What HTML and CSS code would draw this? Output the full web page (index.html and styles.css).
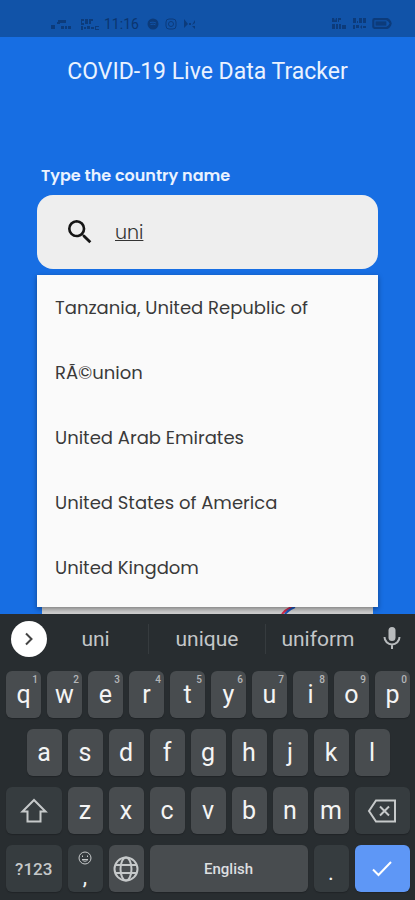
FILE: index.html
```
<!DOCTYPE html>
<html lang="en">
<head>
<meta charset="utf-8">
<meta name="viewport" content="width=device-width, initial-scale=1">
<title>COVID-19 Live Data Tracker</title>
<link rel="stylesheet" href="styles.css">
</head>
<body>
<div class="status">
  <div class="status-group">
    <svg width="22" height="14" viewBox="0 0 22 14" aria-hidden="true"><path d="M1 8h4v4H1zM8 3h8v3H8zM7 5h3v2H7zM11 9h3v3h-3zM15 9h2v3h-2zM18 9h3v3h-3z"/></svg>
    <svg class="net" width="20" height="14" viewBox="0 0 20 14" aria-hidden="true"><path d="M1 2h3v2H2v2h2v2H1zM5 2h3v5H5zM9 2h4v2h-2v3H9zM1 9h2v4H1zM4 10h2v2H4zM7 9h3v3H7zM11 10h3v2h-3zM15 9h4v1h-3v2h3v1h-4z"/></svg>
    <time class="clock">11:16</time>
    <svg class="app" width="12" height="12" viewBox="0 0 12 12" aria-hidden="true"><circle cx="6" cy="6" r="5.5"/><path class="cut" d="M3 4.5q3-1 6 .5M3.5 6.500q3-.8 5 .3"/></svg>
    <svg class="app line" width="12" height="12" viewBox="0 0 12 12" aria-hidden="true"><rect x="1" y="1" width="10" height="10" rx="3"/><circle cx="6" cy="6" r="2.500"/></svg>
    <svg width="13" height="12" viewBox="0 0 13 12" aria-hidden="true"><path d="M1 1l4 5-4 4zM6 5h2v2H6zM12 2v3L9 7zM9 8h3v3z"/></svg>
  </div>
  <div class="status-group">
    <svg width="16" height="13" viewBox="0 0 16 13" aria-hidden="true"><path d="M1 1h2l1 3 1-3h1v4H1zM7 1h3v2H8v2H7zM1 7h3v5H1zM5 7h2v5H5zM8 7h2v5H8zM11 8h4v4h-4z"/></svg>
    <svg width="16" height="13" viewBox="0 0 16 13" aria-hidden="true"><path d="M2 1h3v5H2zM6 4h1v2H6zM8 1h3v5H8zM12 1h3v5h-3zM2 8h2v4H2zM5 8h3v3H5zM9 10l2-2v4zM12 9h3v2h-3z"/></svg>
    <svg width="22" height="13" viewBox="0 0 20 12" aria-hidden="true"><path fill-rule="evenodd" d="M3 1h12q3 1 4 5-1 4-4 5H3q-2 0-2-2V3q0-2 2-2zM3 3v6h11q2-1 3-3-1-2-3-3z"/><path d="M4 4h10v4H4z"/></svg>
  </div>
</div>
<main class="app-body">
  <h1 class="title">COVID-19 Live Data Tracker</h1>
  <div class="finder">
    <label class="label" for="country">Type the country name</label>
    <div class="search">
      <svg width="32" height="32" viewBox="0 0 24 24" aria-hidden="true"><path d="M15.500 14h-.79l-.28-.27A6.470 6.470 0 0 0 16 9.500 6.500 6.500 0 1 0 9.500 16c1.610 0 3.090-.59 4.230-1.570l.27.28v.79l5 4.990L20.490 19l-4.990-5zm-6 0C7.010 14 5 11.990 5 9.500S7.010 5 9.500 5 14 7.010 14 9.500 11.990 14 9.500 14z"/></svg>
      <input class="search-input" id="country" type="text" value="uni" autocomplete="off" spellcheck="false">
    </div>
    <ul class="options">
      <li><button class="option" type="button">Tanzania, United Republic of</button></li>
      <li><button class="option" type="button">RÃ©union</button></li>
      <li><button class="option" type="button">United Arab Emirates</button></li>
      <li><button class="option" type="button">United States of America</button></li>
      <li><button class="option" type="button">United Kingdom</button></li>
    </ul>
    <div class="card-behind">
      <svg width="16" height="7" viewBox="0 0 16 7" aria-hidden="true"><path d="M1 7Q5 2 11 0" stroke="#d32a4c"/><path d="M4 7Q8 2 14 0" stroke="#1d55b8"/></svg>
    </div>
  </div>
</main>
<section class="keyboard" aria-label="Keyboard">
  <div class="suggestions">
    <button class="expand" type="button" aria-label="More"><svg width="18" height="18" viewBox="0 0 18 18" aria-hidden="true"><path d="M6 3.500l5.500 5.500L6 14.500"/></svg></button>
    <button class="word" type="button">uni</button>
    <button class="word" type="button">unique</button>
    <button class="word" type="button">uniform</button>
    <button class="mic" type="button" aria-label="Voice input"><svg width="24" height="26" viewBox="0 0 24 26" aria-hidden="true"><rect x="8.500" y="1" width="7" height="14" rx="3.500"/><path d="M4.500 11a7.500 7.500 0 0 0 15 0M12 18.500V23"/></svg></button>
  </div>
  <div class="keys">
    <button class="key" type="button">q<sup>1</sup></button>
    <button class="key" type="button">w<sup>2</sup></button>
    <button class="key" type="button">e<sup>3</sup></button>
    <button class="key" type="button">r<sup>4</sup></button>
    <button class="key" type="button">t<sup>5</sup></button>
    <button class="key" type="button">y<sup>6</sup></button>
    <button class="key" type="button">u<sup>7</sup></button>
    <button class="key" type="button">i<sup>8</sup></button>
    <button class="key" type="button">o<sup>9</sup></button>
    <button class="key" type="button">p<sup>0</sup></button>
    <button class="key indent" type="button">a</button>
    <button class="key" type="button">s</button>
    <button class="key" type="button">d</button>
    <button class="key" type="button">f</button>
    <button class="key" type="button">g</button>
    <button class="key" type="button">h</button>
    <button class="key" type="button">j</button>
    <button class="key" type="button">k</button>
    <button class="key" type="button">l</button>
    <button class="key wide dim" type="button" aria-label="Shift"><svg width="28" height="28" viewBox="0 0 28 28" aria-hidden="true"><path d="M14 3L2.500 14.500H7.500V24.500H20.500V14.500H25.500Z"/></svg></button>
    <button class="key" type="button">z</button>
    <button class="key" type="button">x</button>
    <button class="key" type="button">c</button>
    <button class="key" type="button">v</button>
    <button class="key" type="button">b</button>
    <button class="key" type="button">n</button>
    <button class="key" type="button">m</button>
    <button class="key wide dim" type="button" aria-label="Delete"><svg width="30" height="26" viewBox="0 0 30 26" aria-hidden="true"><path d="M9 2.500H28V23.500H9L2 13ZM13 8.500l9 9M22 8.500l-9 9"/></svg></button>
    <button class="key wide dim mode" type="button">?123</button>
    <button class="key dim comma" type="button"><svg width="14" height="14" viewBox="0 0 14 14" aria-hidden="true"><circle cx="7" cy="7" r="6"/><path d="M4.500 4.500v1.500M9.500 4.500v1.500M4 8.500q3 3.500 6 0z"/></svg><span>,</span></button>
    <button class="key" type="button" aria-label="Change language"><svg width="28" height="28" viewBox="0 0 28 28" aria-hidden="true"><circle cx="14" cy="14" r="11.500"/><ellipse cx="14" cy="14" rx="5.500" ry="11.500"/><path d="M3.500 10h21M3.500 18h21"/></svg></button>
    <button class="key space" type="button">English</button>
    <button class="key dim period" type="button">.</button>
    <button class="key wide done" type="button" aria-label="Done"><svg width="24" height="24" viewBox="0 0 24 24" aria-hidden="true"><path d="M3 12.500l5.500 5.500L21 5"/></svg></button>
  </div>
</section>
</body>
</html>
```
FILE: styles.css
```
* { box-sizing: border-box; }

body {
  margin: 0;
  min-height: 100vh;
  display: flex;
  flex-direction: column;
  background: #176ee3;
  font-family: Roboto, sans-serif;
}

button {
  margin: 0;
  padding: 0;
  border: 0;
  background: none;
  font: inherit;
  color: inherit;
}

.status {
  height: 37px;
  padding: 10px 22px 0 50px;
  display: flex;
  align-items: center;
  justify-content: space-between;
  background: #1153a8;
  color: #0b356f;
}

.status-group {
  display: flex;
  align-items: center;
  gap: 4px;
}

.status svg { fill: #0c3b7b; }
.status .net { margin-left: 4px; }
.status .app { margin-right: 2px; }
.status .line { fill: none; stroke: #0c3b7b; }
.status .cut { fill: none; stroke: #1153a8; }
.clock { font-size: 14px; margin-right: 4px; }

.app-body {
  flex: 1;
  display: flex;
  flex-direction: column;
}

.title {
  margin: 21px 0 0;
  font-size: 23px;
  line-height: 28px;
  font-weight: 400;
  text-align: center;
  color: #eaf2ff;
}

.finder {
  flex: 1;
  display: flex;
  flex-direction: column;
  padding: 80px 37px 0;
  font-family: Poppins, Inter, sans-serif;
}

.label {
  padding-left: 4px;
  font-size: 16px;
  line-height: 20px;
  font-weight: 600;
  color: #eaf2ff;
}

.search {
  margin-top: 9px;
  height: 74px;
  padding: 0 27px;
  display: flex;
  align-items: center;
  gap: 19px;
  border-radius: 16px;
  background: #eeeeee;
}

.search svg { flex: none; fill: #151515; }

.search-input {
  flex: 1;
  min-width: 0;
  padding: 0;
  border: 0;
  outline: 0;
  background: none;
  font-family: inherit;
  font-size: 19px;
  font-weight: 300;
  color: #333333;
  text-decoration: underline;
}

.options {
  position: relative;
  margin: 6px 0 0;
  padding: 0 0 7px;
  list-style: none;
  background: #fafafa;
  box-shadow: 0 2px 5px rgba(0, 0, 0, 0.4);
}

.option {
  display: block;
  width: 100%;
  height: 65px;
  padding: 0 18px;
  text-align: left;
  font-size: 18px;
  color: #3a3a3a;
}

.card-behind {
  flex: 1;
  margin: 0 5px;
  padding-right: 76px;
  display: flex;
  justify-content: flex-end;
  background: #cfcfcf;
}

.card-behind svg { fill: none; stroke-width: 2; }

.keyboard {
  padding: 0 5px 8px 6px;
  background: #282d30;
}

.suggestions {
  height: 50px;
  margin-bottom: 7px;
  padding-left: 5px;
  display: grid;
  grid-template-columns: 32px 9fr 10fr 9fr 40px;
  align-items: center;
}

.expand {
  width: 36px;
  height: 36px;
  display: grid;
  place-items: center;
  border-radius: 50%;
  background: #ffffff;
}

.expand svg { fill: none; stroke: #444444; stroke-width: 2; }

.word {
  height: 30px;
  font-size: 21px;
  color: #c3c6c8;
}

.word + .word { border-left: 1px solid #363b3e; }

.mic {
  width: 36px;
  height: 36px;
  justify-self: end;
  display: grid;
  place-items: center;
}

.mic svg { fill: none; stroke: #b9bcbe; stroke-width: 2; }
.mic rect { fill: #b9bcbe; stroke: none; }

.keys {
  display: grid;
  grid-template-columns: repeat(20, minmax(0, 1fr));
  grid-auto-rows: 47px;
  gap: 11px 6px;
}

.key {
  position: relative;
  grid-column-end: span 2;
  display: flex;
  align-items: center;
  justify-content: center;
  border-radius: 6px;
  background: #484c4f;
  box-shadow: 0 1px 1px #202427;
  font-size: 25px;
  color: #f4f4f4;
}

.key sup {
  position: absolute;
  top: 3px;
  right: 3px;
  font-size: 10px;
  font-weight: 500;
  line-height: 12px;
  color: #b4b7b9;
}

.key svg { fill: none; stroke: #c6c9ca; stroke-width: 2; }
.indent { grid-column-start: 2; }
.wide { grid-column-end: span 3; }
.dim { background: #363c3f; }
.mode { font-size: 17px; font-weight: 500; color: #c6c9ca; }
.comma { flex-direction: column; gap: 2px; line-height: 20px; font-size: 22px; }
.comma svg { stroke-width: 1; }
.period { padding-top: 8px; font-size: 22px; }
.space { grid-column-end: span 8; font-size: 15px; font-weight: 500; color: #dddfe0; }
.done { background: #5e97f6; }
.done svg { stroke: #ffffff; }
```
